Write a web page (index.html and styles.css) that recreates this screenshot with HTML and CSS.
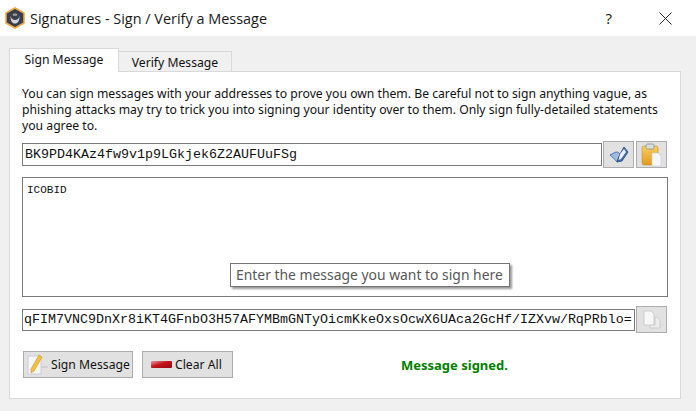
FILE: index.html
```html
<!DOCTYPE html>
<html lang="en">
<head>
  <meta charset="UTF-8">
  <title>Signatures - Sign / Verify a Message</title>
  <link rel="stylesheet" href="styles.css">
</head>
<body>
  <div class="window">
    <!-- Title bar -->
    <div class="titlebar">
      <svg class="logo" width="20" height="22" viewBox="0 0 20 22">
        <path d="M10 1 L19 6 V16 L10 21 L1 16 V6 Z" fill="#3a3f4c" stroke="#f0a845" stroke-width="1.6"/>
        <path d="M5.5 9 C5.5 15 8 16.5 10 16.5 C12 16.5 14.5 15 14.5 9 C13.5 12 12 13 10 13 C8 13 6.5 12 5.5 9 Z" fill="#d5d7dc"/>
        <path d="M7.5 7.5 C8.5 6.3 11.5 6.3 12.5 7.5 L11.5 9 C11 8.5 9 8.5 8.5 9 Z" fill="#9a9ea8"/>
      </svg>
      <span class="title">Signatures - Sign / Verify a Message</span>
      <span class="help">?</span>
      <svg class="close" width="13" height="13" viewBox="0 0 13 13">
        <path d="M0.5 0.5 L12.5 12.5 M12.5 0.5 L0.5 12.5" stroke="#222" stroke-width="1" fill="none"/>
      </svg>
    </div>

    <div class="content">
      <div class="tabs">
        <div class="tab active">Sign Message</div>
        <div class="tab">Verify Message</div>
      </div>

      <div class="panel">
        <p class="intro">You can sign messages with your addresses to prove you own them. Be careful not to sign anything vague, as phishing attacks may try to trick you into signing your identity over to them. Only sign fully-detailed statements you agree to.</p>

        <div class="row address-row">
          <div class="field address">BK9PD4KAz4fw9v1p9LGkjek6Z2AUFUuFSg</div>
          <button class="icon-btn">
            <svg width="20" height="17" viewBox="0 0 20 17">
              <path d="M1 9 L7 6 C9 6 10 7 11 8 L8 16 C6 13 3 11 1 9 Z" fill="#9dbce6" stroke="#3a5a90" stroke-width="0.8"/>
              <path d="M11 8 L15 1 L19 6 L13 15 L8 16 Z" fill="#3f6cb0" stroke="#23447c" stroke-width="0.8"/>
              <path d="M11 8 L15 3 L17 6 L12 13 L9.5 14 Z" fill="#eaf0f8"/>
            </svg>
          </button>
          <button class="icon-btn">
            <svg width="22" height="24" viewBox="0 0 22 24">
              <defs>
                <linearGradient id="board" x1="0" y1="0" x2="0" y2="1">
                  <stop offset="0" stop-color="#f6cf62"/>
                  <stop offset="1" stop-color="#e39a1e"/>
                </linearGradient>
              </defs>
              <rect x="1" y="3" width="16" height="19" rx="2" fill="url(#board)" stroke="#bf9030" stroke-width="0.6"/>
              <rect x="5" y="1" width="8" height="5" rx="1.5" fill="#dcdcdc" stroke="#8c8c8c" stroke-width="0.8"/>
              <path d="M11 10 H17 L20 13 V23 H11 Z" fill="#f6f7fa" stroke="#c8ccd4" stroke-width="0.6"/>
            </svg>
          </button>
        </div>

        <div class="message">
          ICOBID
          <div class="tooltip">Enter the message you want to sign here</div>
        </div>

        <div class="row signature-row">
          <div class="field signature">qFIM7VNC9DnXr8iKT4GFnbO3H57AFYMBmGNTyOicmKkeOxsOcwX6UAca2GcHf/IZXvw/RqPRblo=</div>
          <button class="icon-btn">
            <svg width="20" height="20" viewBox="0 0 20 20">
              <path d="M2 1 H9 L12 4 V15 H2 Z" fill="#f7f7f7" stroke="#c6c6c6" stroke-width="0.8"/>
              <path d="M13 7 H15 L18 10 V18 H8 V15 H13 Z" fill="#ececec" stroke="#c6c6c6" stroke-width="0.8"/>
            </svg>
          </button>
        </div>

        <div class="row action-row">
          <button class="action sign">
            <svg width="22" height="22" viewBox="0 0 22 22">
              <path d="M1 2 H12 L14 5 V20 H1 Z" fill="#f5f6fa" stroke="#c2c6d2" stroke-width="0.8"/>
              <path d="M4 15 L12 1 L15 3 L7 17 L4 19 Z" fill="#f3c33f" stroke="#d99a25" stroke-width="0.7"/>
              <path d="M14 13 H21" stroke="#d0d0d0" stroke-width="2"/>
            </svg>
            <span>Sign Message</span>
          </button>
          <button class="action clear">
            <svg width="21" height="9" viewBox="0 0 21 9">
              <defs>
                <linearGradient id="red" x1="0" y1="0" x2="1" y2="1">
                  <stop offset="0" stop-color="#e8a0a0"/>
                  <stop offset="0.45" stop-color="#c8141c"/>
                  <stop offset="1" stop-color="#8c0c12"/>
                </linearGradient>
              </defs>
              <rect x="0" y="1" width="21" height="7" rx="1" fill="url(#red)"/>
            </svg>
            <span>Clear All</span>
          </button>
          <div class="status">Message signed.</div>
        </div>
      </div>
    </div>
  </div>
</body>
</html>
```

FILE: styles.css
```css
html, body {
  margin: 0;
  padding: 0;
}
body {
  width: 696px;
  height: 411px;
  overflow: hidden;
  font-family: 'Noto Sans', 'Liberation Sans', sans-serif;
  color: #111;
}
.window {
  display: flex;
  flex-direction: column;
  height: 411px;
  background: #f0f0f0;
}
.titlebar {
  height: 36px;
  background: white;
  display: flex;
  align-items: center;
  padding: 0 24px 0 5px;
}
.logo {
  margin-right: 5px;
}
.title {
  flex: 1;
  font-family: 'Open Sans', sans-serif;
  font-size: 14.45px;
  color: #1a1a1a;
}
.help {
  font-family: 'Open Sans', sans-serif;
  font-size: 15px;
  margin-right: 47px;
}
.content {
  padding: 13px 15px 10px 9px;
}
.tabs {
  display: flex;
  align-items: flex-end;
  height: 23px;
  margin-bottom: -1px;
}
.tab {
  position: relative;
  width: 113px;
  height: 21px;
  box-sizing: border-box;
  border: 1px solid #d9d9d9;
  background: #f0f0f0;
  border-left: none;
  text-align: center;
  font-size: 12.2px;
  line-height: 21px;
}
.tab.active {
  width: 110px;
  height: 24px;
  background: white;
  border-left: 1px solid #d9d9d9;
  border-bottom: none;
  z-index: 1;
}
.panel {
  height: 328px;
  box-sizing: border-box;
  background: white;
  border: 1px solid #d9d9d9;
  padding: 14px 12px 0 12px;
  font-size: 12.2px;
}
.intro {
  margin: 0;
  line-height: 16px;
  height: 48px;
}
.row {
  display: flex;
  align-items: center;
}
.address-row {
  margin-top: 7px;
  height: 27px;
}
.field {
  box-sizing: border-box;
  border: 1px solid #7a7a7a;
  background: white;
  font-family: 'Liberation Mono', monospace;
  font-size: 13.33px;
  white-space: nowrap;
  overflow: hidden;
}
.address {
  width: 580px;
  height: 23px;
  line-height: 21px;
  padding-left: 2px;
}
.signature {
  width: 613px;
  height: 22px;
  line-height: 20px;
  padding-left: 1px;
}
.icon-btn {
  width: 31px;
  height: 27px;
  margin-left: 1px;
  padding: 0;
  box-sizing: border-box;
  border: 1px solid #adadad;
  background: #e1e1e1;
  display: flex;
  align-items: center;
  justify-content: center;
}
.address-row .icon-btn + .icon-btn {
  margin-left: 2px;
}
.message {
  position: relative;
  box-sizing: border-box;
  width: 646px;
  height: 120px;
  margin-top: 9px;
  border: 1px solid #7a7a7a;
  padding: 5px 4px;
  font-family: 'Liberation Mono', monospace;
  font-size: 11px;
  line-height: 15px;
}
.tooltip {
  position: absolute;
  left: 207px;
  top: 85px;
  width: 280px;
  height: 24px;
  box-sizing: border-box;
  border: 1px solid #767676;
  background: white;
  box-shadow: 2px 2px 2px #999;
  color: #575757;
  font-family: 'Noto Sans', sans-serif;
  font-size: 13.9px;
  line-height: 22px;
  padding-left: 5px;
  white-space: nowrap;
}
.signature-row {
  margin-top: 9px;
  height: 27px;
}
.action-row {
  margin-top: 18px;
  padding-left: 1px;
  height: 27px;
}
.action {
  height: 27px;
  box-sizing: border-box;
  border: 1px solid #adadad;
  background: #e1e1e1;
  font-family: 'Noto Sans', sans-serif;
  font-size: 12.2px;
  color: #111;
  display: flex;
  align-items: center;
  padding: 0;
  white-space: nowrap;
}
.sign {
  width: 110px;
  gap: 2px;
  padding-left: 3px;
}
.clear {
  width: 91px;
  margin-left: 9px;
  gap: 3px;
  padding-left: 8px;
}
.status {
  margin-left: 168px;
  color: #008000;
  font-weight: bold;
  font-size: 13px;
}
```
